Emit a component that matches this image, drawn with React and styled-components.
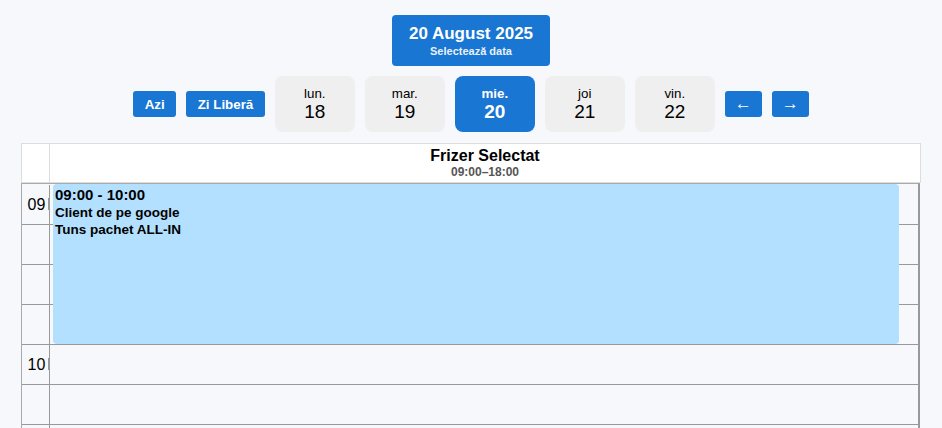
import React from 'react';
import styled, { createGlobalStyle } from 'styled-components';

const GlobalStyle = createGlobalStyle`
  body {
    margin: 0;
    background-color: #f7f8fc;
    font-family: "Liberation Sans", Arial, sans-serif;
    color: #000;
  }
`;

const Page = styled.div`
  display: flex;
  flex-direction: column;
  align-items: center;
  padding: 15px 21px 0;
`;

const DateButton = styled.button`
  width: 158px;
  height: 51px;
  border: none;
  border-radius: 4px;
  background-color: #1976d2;
  color: white;
  font-family: inherit;
  display: flex;
  flex-direction: column;
  align-items: center;
  justify-content: center;
  padding: 0;
  cursor: pointer;
`;

const DateTitle = styled.span`
  font-size: 17px;
  font-weight: bold;
  line-height: 20px;
`;

const DateHint = styled.span`
  font-size: 11px;
  font-weight: bold;
  line-height: 14px;
  opacity: 0.9;
`;

const NavRow = styled.div`
  display: flex;
  align-items: center;
  gap: 10px;
  margin-top: 10px;
`;

const ActionButton = styled.button`
  height: 26px;
  padding: 0 ${(props) => (props.$arrow ? '0' : '11.5px')};
  width: ${(props) => (props.$arrow ? '37px' : 'auto')};
  border: none;
  border-radius: 3px;
  background-color: #1976d2;
  color: white;
  font-family: inherit;
  font-size: ${(props) => (props.$arrow ? '17px' : '13.333px')};
  font-weight: bold;
  cursor: pointer;
`;

const DayCard = styled.button`
  width: 80px;
  height: 56px;
  border: none;
  border-radius: 8px;
  background-color: ${(props) => (props.$active ? '#1976d2' : '#efefef')};
  color: ${(props) => (props.$active ? 'white' : '#000')};
  font-family: inherit;
  font-weight: ${(props) => (props.$active ? 'bold' : 'normal')};
  display: flex;
  flex-direction: column;
  align-items: center;
  justify-content: center;
  padding: 0;
  cursor: pointer;
`;

const DayName = styled.span`
  font-size: 13.333px;
  line-height: 15px;
`;

const DayNumber = styled.span`
  font-size: 19px;
  line-height: 21px;
`;

const Calendar = styled.div`
  align-self: stretch;
  margin-top: 11px;
`;

const HeaderRow = styled.div`
  display: grid;
  grid-template-columns: 28px 1fr;
  height: 40px;
  box-sizing: border-box;
  border: 1px solid #ddd;
  background-color: white;
`;

const HeaderCorner = styled.div`
  border-right: 1px solid #ddd;
`;

const HeaderCell = styled.div`
  display: flex;
  flex-direction: column;
  align-items: center;
  justify-content: center;
`;

const HeaderName = styled.div`
  font-size: 16px;
  font-weight: bold;
  line-height: 18px;
`;

const HeaderHours = styled.div`
  font-size: 12px;
  font-weight: bold;
  line-height: 14px;
  color: #555;
`;

const Body = styled.div`
  position: relative;
  margin-right: 1px;
  padding-top: 1px;
  border-top: 1px solid #aaa;
  border-left: 1px solid #aaa;
  border-right: 2px solid #999;
`;

const SlotRow = styled.div`
  display: grid;
  grid-template-columns: 28px 1fr;
  height: 40px;
  box-sizing: border-box;
  border-bottom: 1px solid #999;
`;

const TimeCell = styled.div`
  position: relative;
  border-right: 1px solid #999;
  display: flex;
  align-items: center;
  justify-content: center;
  padding-left: 2px;
  font-size: 16px;

  &::after {
    content: ${(props) => (props.$label ? '""' : 'none')};
    position: absolute;
    right: -1px;
    top: 13px;
    width: 2px;
    height: 12px;
    background-color: #999;
  }
`;

const Slot = styled.div``;

const Event = styled.div`
  position: absolute;
  top: 0;
  left: 31px;
  right: 19px;
  height: 160px;
  box-sizing: border-box;
  padding: 2px 2px;
  border-radius: 4px;
  background-color: #b3e0ff;
  font-weight: bold;
`;

const EventTime = styled.div`
  font-size: 15px;
  line-height: 18px;
`;

const EventLine = styled.div`
  font-size: 13.5px;
  line-height: 17px;
`;

const days = [
  { name: 'lun.', num: 18 },
  { name: 'mar.', num: 19 },
  { name: 'mie.', num: 20, active: true },
  { name: 'joi', num: 21 },
  { name: 'vin.', num: 22 },
];

const hours = ['09', '10'];

const App = () => {
  const slots = [];
  hours.forEach((h) => {
    for (let i = 0; i < 4; i++) {
      slots.push({ key: `${h}-${i}`, label: i === 0 ? h : '' });
    }
  });

  return (
    <>
      <GlobalStyle />
      <Page>
        <DateButton>
          <DateTitle>20 August 2025</DateTitle>
          <DateHint>Selectează data</DateHint>
        </DateButton>
        <NavRow>
          <ActionButton>Azi</ActionButton>
          <ActionButton>Zi Liberă</ActionButton>
          {days.map((d) => (
            <DayCard key={d.num} $active={d.active}>
              <DayName>{d.name}</DayName>
              <DayNumber>{d.num}</DayNumber>
            </DayCard>
          ))}
          <ActionButton $arrow>←</ActionButton>
          <ActionButton $arrow>→</ActionButton>
        </NavRow>
        <Calendar>
          <HeaderRow>
            <HeaderCorner />
            <HeaderCell>
              <HeaderName>Frizer Selectat</HeaderName>
              <HeaderHours>09:00–18:00</HeaderHours>
            </HeaderCell>
          </HeaderRow>
          <Body>
            {slots.map((s) => (
              <SlotRow key={s.key}>
                <TimeCell $label={!!s.label}>{s.label}</TimeCell>
                <Slot />
              </SlotRow>
            ))}
            <Event>
              <EventTime>09:00 - 10:00</EventTime>
              <EventLine>Client de pe google</EventLine>
              <EventLine>Tuns pachet ALL-IN</EventLine>
            </Event>
          </Body>
        </Calendar>
      </Page>
    </>
  );
};

export default App;
